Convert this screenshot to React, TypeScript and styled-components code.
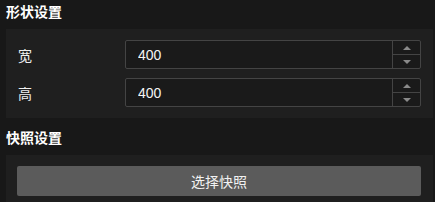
import * as React from 'react';
import styled, { createGlobalStyle } from 'styled-components';

const GlobalStyle = createGlobalStyle`
  html, body {
    margin: 0;
    padding: 0;
    background: #181818;
    font-family: "Noto Sans CJK SC", "Liberation Sans", sans-serif;
    color: #e8e8e8;
  }
`;

const Page = styled.div`
  display: flex;
  flex-direction: column;
  width: 435px;
  height: 202px;
  overflow: hidden;
  background: #181818;
`;

const Section = styled.div<{ $first?: boolean }>`
  display: flex;
  flex-direction: column;
  margin-top: ${p => (p.$first ? '0' : '8px')};
`;

const Title = styled.div`
  height: 22px;
  line-height: 22px;
  padding: 0 6px;
  margin-bottom: 7px;
  font-size: 14px;
  font-weight: 700;
  color: #ffffff;
`;

const Panel = styled.div`
  display: flex;
  flex-direction: column;
  gap: 9px;
  margin: 0 2px 0 6px;
  padding: 11px 12px 11px 11px;
  background: #1f1f1f;
`;

const Row = styled.div`
  display: grid;
  grid-template-columns: 108px 1fr;
  align-items: center;
`;

const Label = styled.span`
  padding-left: 1px;
  font-size: 14px;
  color: #f0f0f0;
`;

const InputBox = styled.div`
  display: flex;
  height: 29px;
  border: 1px solid #444;
  border-radius: 2px;
  background: #1a1a1a;
  box-sizing: border-box;
`;

const Field = styled.input`
  flex: 1;
  min-width: 0;
  padding: 0 12px;
  border: none;
  outline: none;
  background: transparent;
  color: #f5f5f5;
  font-family: "Liberation Sans", "Noto Sans CJK SC", sans-serif;
  font-size: 14px;
`;

const Spinner = styled.div`
  display: flex;
  flex-direction: column;
  width: 27px;
  border-left: 1px solid #444;
`;

const SpinButton = styled.div<{ $down?: boolean }>`
  flex: 1;
  display: flex;
  align-items: center;
  justify-content: center;
  border-top: ${p => (p.$down ? '1px solid #444' : 'none')};
  &::after {
    content: '';
    width: 0;
    height: 0;
    border-left: 4px solid transparent;
    border-right: 4px solid transparent;
    ${p => (p.$down ? 'border-top: 4px solid #8a8a8a;' : 'border-bottom: 4px solid #8a8a8a;')}
  }
`;

const Button = styled.button`
  height: 30px;
  border: none;
  border-radius: 2px;
  background: #5b5b5b;
  color: #f2f2f2;
  font-family: "Noto Sans CJK SC", "Liberation Sans", sans-serif;
  font-size: 14px;
  cursor: pointer;
`;

const NumberInput = ({ value }: { value: number }) => (
  <InputBox>
    <Field type="text" defaultValue={String(value)} />
    <Spinner>
      <SpinButton />
      <SpinButton $down />
    </Spinner>
  </InputBox>
);

const App = () => (
  <Page>
    <GlobalStyle />
    <Section $first>
      <Title>形状设置</Title>
      <Panel>
        <Row>
          <Label>宽</Label>
          <NumberInput value={400} />
        </Row>
        <Row>
          <Label>高</Label>
          <NumberInput value={400} />
        </Row>
      </Panel>
    </Section>
    <Section>
      <Title>快照设置</Title>
      <Panel>
        <Button>选择快照</Button>
      </Panel>
    </Section>
  </Page>
);

export default App;
